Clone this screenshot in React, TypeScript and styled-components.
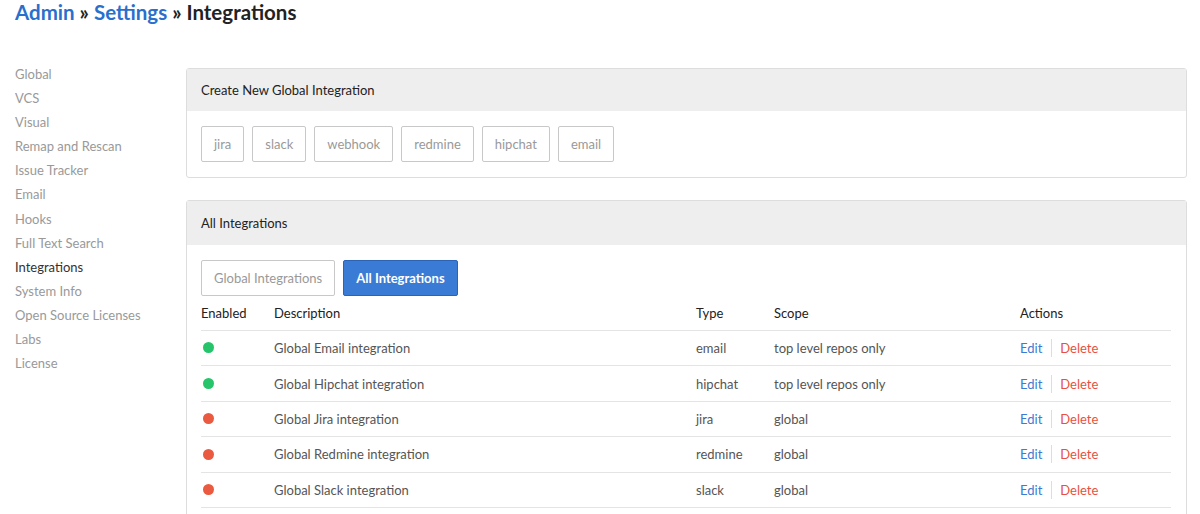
import React from "react";
import styled, { createGlobalStyle } from "styled-components";

const GlobalStyle = createGlobalStyle`
  body {
    margin: 0;
    background: #fff;
    font-family: Lato, "Open Sans", Arial, sans-serif;
    color: #333;
  }
`;

const Page = styled.div`
  padding: 0 13px 0 15px;
`;

const Title = styled.h1`
  margin: 0;
  padding-top: 1px;
  height: 60px;
  font-size: 20.5px;
  font-weight: 700;
  line-height: 22px;
  color: #222;
  a {
    color: #2b6fcd;
    text-decoration: none;
  }
`;

const Layout = styled.div`
  display: flex;
`;

const Sidebar = styled.nav`
  width: 171px;
  flex-shrink: 0;
  padding-top: 1px;
  display: flex;
  flex-direction: column;
`;

const NavItem = styled.a<{ $active?: boolean }>`
  font-size: 13px;
  line-height: 24.1px;
  color: ${(p) => (p.$active ? "#333" : "#999")};
  text-decoration: none;
`;

const Content = styled.div`
  flex: 1;
  padding-top: 7px;
  display: flex;
  flex-direction: column;
  gap: 22px;
`;

const Panel = styled.section`
  border: 1px solid #ddd;
  border-radius: 3px;
`;

const PanelHeader = styled.div<{ $h?: number }>`
  height: ${(p) => p.$h ?? 42}px;
  background: #eee;
  display: flex;
  align-items: center;
  padding: 0 14px;
  font-size: 13px;
  color: #222;
`;

const PanelBody = styled.div`
  padding: 15px 14px 15px;
`;

const ButtonRow = styled.div`
  display: flex;
  gap: 8px;
`;

const Button = styled.button<{ $primary?: boolean }>`
  height: 36px;
  padding: 0 12px;
  font-family: inherit;
  font-size: 13px;
  border-radius: 2px;
  cursor: pointer;
  border: 1px solid ${(p) => (p.$primary ? "#2a63b8" : "#c8c8c8")};
  background: ${(p) => (p.$primary ? "#3a7bd5" : "#fff")};
  color: ${(p) => (p.$primary ? "#fff" : "#999")};
  font-weight: ${(p) => (p.$primary ? 700 : 400)};
`;

const Table = styled.table`
  width: 970px;
  border-collapse: collapse;
  font-size: 13px;
`;

const Th = styled.th<{ $w: number }>`
  width: ${(p) => p.$w}px;
  text-align: left;
  font-weight: 400;
  color: #222;
  height: 34px;
  padding: 0;
  border-bottom: 1px solid #e4e4e4;
`;

const Td = styled.td`
  height: 34.4px;
  padding: 0;
  color: #555;
  border-bottom: 1px solid #e4e4e4;
`;

const Dot = styled.span<{ $on: boolean }>`
  display: inline-block;
  width: 11px;
  height: 11px;
  border-radius: 50%;
  margin-left: 2px;
  vertical-align: middle;
  position: relative;
  top: -2px;
  background: ${(p) => (p.$on ? "#27c46c" : "#ea5a40")};
`;

const Actions = styled.div`
  display: flex;
  align-items: center;
`;

const ActionLink = styled.a<{ $danger?: boolean }>`
  color: ${(p) => (p.$danger ? "#e8513f" : "#3b7bd4")};
  text-decoration: none;
  cursor: pointer;
`;

const Divider = styled.span`
  width: 1px;
  height: 18px;
  background: #ddd;
  margin: 0 8px 0 9px;
`;

const navItems = [
  "Global",
  "VCS",
  "Visual",
  "Remap and Rescan",
  "Issue Tracker",
  "Email",
  "Hooks",
  "Full Text Search",
  "Integrations",
  "System Info",
  "Open Source Licenses",
  "Labs",
  "License",
];

const newTypes = ["jira", "slack", "webhook", "redmine", "hipchat", "email"];

const rows = [
  { on: true, desc: "Global Email integration", type: "email", scope: "top level repos only" },
  { on: true, desc: "Global Hipchat integration", type: "hipchat", scope: "top level repos only" },
  { on: false, desc: "Global Jira integration", type: "jira", scope: "global" },
  { on: false, desc: "Global Redmine integration", type: "redmine", scope: "global" },
  { on: false, desc: "Global Slack integration", type: "slack", scope: "global" },
];

export default function App() {
  return (
    <Page>
      <GlobalStyle />
      <Title>
        <a href="#">Admin</a> » <a href="#">Settings</a> » Integrations
      </Title>
      <Layout>
        <Sidebar>
          {navItems.map((n) => (
            <NavItem key={n} href="#" $active={n === "Integrations"}>
              {n}
            </NavItem>
          ))}
        </Sidebar>
        <Content>
          <Panel>
            <PanelHeader>Create New Global Integration</PanelHeader>
            <PanelBody>
              <ButtonRow>
                {newTypes.map((t) => (
                  <Button key={t}>{t}</Button>
                ))}
              </ButtonRow>
            </PanelBody>
          </Panel>
          <Panel>
            <PanelHeader $h={44}>All Integrations</PanelHeader>
            <PanelBody>
              <ButtonRow>
                <Button>Global Integrations</Button>
                <Button $primary>All Integrations</Button>
              </ButtonRow>
              <Table>
                <thead>
                  <tr>
                    <Th $w={73}>Enabled</Th>
                    <Th $w={422}>Description</Th>
                    <Th $w={78}>Type</Th>
                    <Th $w={246}>Scope</Th>
                    <Th $w={151}>Actions</Th>
                  </tr>
                </thead>
                <tbody>
                  {rows.map((r) => (
                    <tr key={r.desc}>
                      <Td>
                        <Dot $on={r.on} />
                      </Td>
                      <Td>{r.desc}</Td>
                      <Td>{r.type}</Td>
                      <Td>{r.scope}</Td>
                      <Td>
                        <Actions>
                          <ActionLink>Edit</ActionLink>
                          <Divider />
                          <ActionLink $danger>Delete</ActionLink>
                        </Actions>
                      </Td>
                    </tr>
                  ))}
                </tbody>
              </Table>
            </PanelBody>
          </Panel>
        </Content>
      </Layout>
    </Page>
  );
}
